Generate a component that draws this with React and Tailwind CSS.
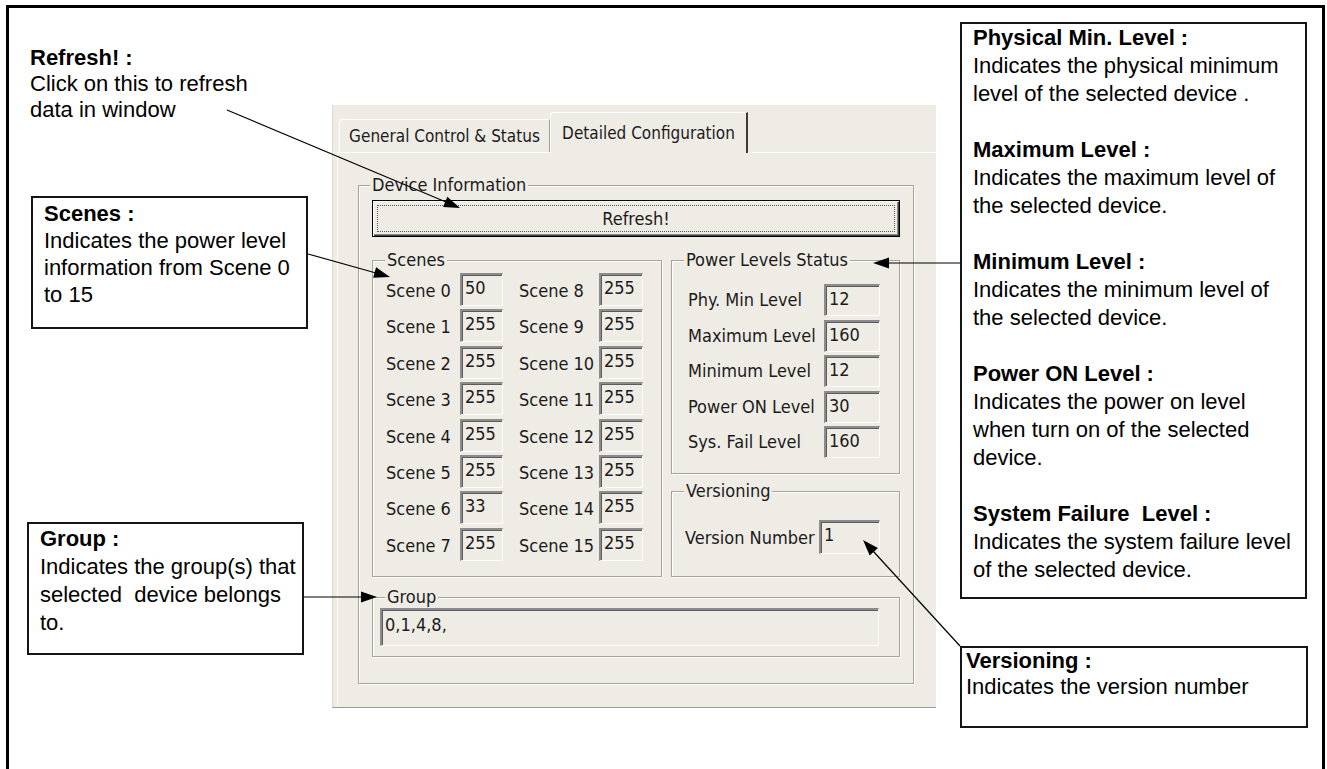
const DLG = "font-['DejaVu_Sans_Condensed','DejaVu_Sans',sans-serif] font-stretch-condensed text-[#1b1b1b]";

function Sunken({ cls, children }) {
  return (
    <div className={"shrink-0 border-t-2 border-l-2 border-t-[#8c8c8c] border-l-[#8c8c8c] border-b border-r border-b-white border-r-white shadow-[inset_1px_1px_0_#5c5c5c] bg-[#efece6] text-[18px] leading-[20px] pl-[3px] pt-[3px] " + cls}>
      {children}
    </div>
  );
}

function Legend({ children }) {
  return (
    <legend className="ml-[12px] px-[2px] bg-[#efece6] text-[18px] leading-[22px]">{children}</legend>
  );
}

const left = ["50", "255", "255", "255", "255", "255", "33", "255"];
const power = [
  ["Phy. Min Level", "12"],
  ["Maximum Level", "160"],
  ["Minimum Level", "12"],
  ["Power ON Level", "30"],
  ["Sys. Fail Level", "160"],
];

const paras = [
  ["Physical Min. Level :", ["Indicates the physical minimum", "level of the selected device ."]],
  ["Maximum Level :", ["Indicates the maximum level of", "the selected device."]],
  ["Minimum Level :", ["Indicates the minimum level of", "the selected device."]],
  ["Power ON Level :", ["Indicates the power on level", "when turn on of the selected", "device."]],
  ["System Failure  Level :", ["Indicates the system failure level", "of the selected device."]],
];

function Dialog() {
  return (
    <div className={"mt-[97px] w-[604px] h-[603px] shrink-0 bg-[#efece6] border-l border-l-[#dcd9d0] border-b border-b-[#9a9a9a] flex flex-col " + DLG}>
      {/* tabs */}
      <div className="h-[47px] flex items-end pl-[6px] shrink-0">
        <div className="w-[211px] h-[33px] border-t border-l border-white border-r border-r-[#a0a0a0] rounded-tl-[3px] flex items-center justify-center text-[17px] leading-[20px]">
          General Control &amp; Status
        </div>
        <div className="relative z-10 -mb-px w-[198px] h-[41px] bg-[#efece6] border-t border-l border-white border-r-2 border-r-[#3c3c3c] rounded-tl-[3px] flex items-center justify-center text-[17px] leading-[20px]">
          Detailed Configuration
        </div>
      </div>
      {/* tab page */}
      <div className="flex-1 ml-[4px] border-l border-t border-white flex flex-col items-start">
        <fieldset className="ml-[20px] mt-[21px] w-[548px] h-[510px] border border-[#a5a49a] shadow-[inset_1px_1px_0_#fff,1px_1px_0_#fff] px-[13px]">
          <legend className="-ml-[2px] px-[2px] bg-[#efece6] text-[18px] leading-[22px]">Device Information</legend>
          <div className="flex flex-col">
            {/* refresh button */}
            <div className="mt-[4px] w-[528px] h-[37px] border border-black bg-[#efece6] shadow-[inset_1px_1px_0_#fff,inset_-1px_-1px_0_#404040,inset_-2px_-2px_0_#8a8a8a] p-[4px]">
              <div className="w-full h-full border border-dotted border-[#555] flex items-center justify-center text-[18px] leading-[20px]">
                Refresh!
              </div>
            </div>
            {/* row */}
            <div className="mt-[12px] flex gap-[9px]">
              <fieldset className="w-[290px] h-[328px] border border-[#a5a49a] shadow-[inset_1px_1px_0_#fff,1px_1px_0_#fff]">
                <Legend>Scenes</Legend>
                <div className="pt-[2px] flex flex-col gap-[3.4px]">
                  {left.map((v, i) => (
                    <div key={i} className="flex items-start h-[33px] pl-[13px]">
                      <div className="w-[74px] pt-[8px] text-[18px] leading-[20px] whitespace-nowrap">Scene {i}</div>
                      <Sunken cls="w-[43px] h-[33px]">{v}</Sunken>
                      <div className="ml-[16px] w-[80px] pt-[8px] text-[18px] leading-[20px] whitespace-nowrap">Scene {i + 8}</div>
                      <Sunken cls="w-[44px] h-[33px]">255</Sunken>
                    </div>
                  ))}
                </div>
              </fieldset>
              <div className="w-[229px] flex flex-col">
                <fieldset className="w-[229px] h-[225px] border border-[#a5a49a] shadow-[inset_1px_1px_0_#fff,1px_1px_0_#fff]">
                  <Legend>Power Levels Status</Legend>
                  <div className="pt-[13px] flex flex-col gap-[3.5px]">
                    {power.map(([l, v]) => (
                      <div key={l} className="flex items-start h-[32px] pl-[16px]">
                        <div className="w-[136px] pt-[6px] text-[18px] leading-[20px] whitespace-nowrap">{l}</div>
                        <Sunken cls="w-[56px] h-[32px]">{v}</Sunken>
                      </div>
                    ))}
                  </div>
                </fieldset>
                <fieldset className="mt-[6px] w-[229px] h-[97px] border border-[#a5a49a] shadow-[inset_1px_1px_0_#fff,1px_1px_0_#fff]">
                  <Legend>Versioning</Legend>
                  <div className="mt-[18px] flex items-start pl-[13px]">
                    <div className="w-[134px] pt-[8px] text-[18px] leading-[20px] whitespace-nowrap">Version Number</div>
                    <Sunken cls="w-[61px] h-[34px]">1</Sunken>
                  </div>
                </fieldset>
              </div>
            </div>
            {/* group */}
            <fieldset className="mt-[9px] w-[528px] h-[71px] border border-[#a5a49a] shadow-[inset_1px_1px_0_#fff,1px_1px_0_#fff]">
              <Legend>Group</Legend>
              <div className="ml-[7px]">
                <Sunken cls="w-[499px] h-[38px] pt-[5px]">0,1,4,8,</Sunken>
              </div>
            </fieldset>
          </div>
        </fieldset>
      </div>
    </div>
  );
}

function Arrows() {
  return (
    <svg className="absolute top-0 left-0 pointer-events-none" width="1327" height="769" viewBox="0 0 1327 769">
      <g stroke="#000" strokeWidth="1.2" fill="none">
        <line x1="227" y1="110" x2="446" y2="202" />
        <line x1="308" y1="254" x2="376" y2="273" />
        <line x1="960" y1="263" x2="888" y2="263" />
        <line x1="304" y1="597" x2="362" y2="597" />
        <line x1="960" y1="646" x2="873" y2="551" />
      </g>
      <g fill="#000">
        <polygon points="460,208 443.1,206.9 447.4,196.7" />
        <polygon points="390,277 373.1,277.8 376.1,267.2" />
        <polygon points="873,263 889,257.5 889,268.5" />
        <polygon points="377,597 361,591.5 361,602.5" />
        <polygon points="863,540 877.9,548.1 869.7,555.5" />
      </g>
    </svg>
  );
}

export default function App() {
  return (
    <div className="relative w-[1327px] h-[769px] bg-white overflow-hidden font-['Liberation_Sans',Arial,sans-serif] text-black">
      <div className="ml-[6px] mt-[5px] w-[1319px] h-[764px] border-l-[3px] border-t-[3px] border-r-[3px] border-black flex items-start">
        {/* left column */}
        <div className="w-[323px] shrink-0 flex flex-col items-start">
          <div className="ml-[21px] mt-[37px] text-[22px] leading-[26px]">
            <div className="font-bold">Refresh! :</div>
            <div>Click on this to refresh</div>
            <div>data in window</div>
          </div>
          <div className="ml-[22px] mt-[73px] w-[277px] h-[133px] border-2 border-[#151515] pl-[11px] pt-[2px] text-[22px] leading-[27px]">
            <div className="font-bold">Scenes :</div>
            <div>Indicates the power level</div>
            <div>information from Scene 0</div>
            <div>to 15</div>
          </div>
          <div className="ml-[18px] mt-[193px] w-[277px] h-[133px] border-2 border-[#151515] pl-[11px] pt-[1px] text-[22px] leading-[28px]">
            <div className="font-bold">Group :</div>
            <div>Indicates the group(s) that</div>
            <div className="whitespace-pre">selected  device belongs</div>
            <div>to.</div>
          </div>
        </div>
        <Dialog />
        {/* right column */}
        <div className="ml-[24px] mt-[14px] flex flex-col shrink-0">
          <div className="w-[347px] h-[577px] border-2 border-[#151515] pl-[11px] text-[22px] leading-[28px]">
            {paras.map(([t, lines], i) => (
              <div key={t} className={i === 0 ? "" : "mt-[28px]"}>
                <div className="font-bold whitespace-pre">{t}</div>
                {lines.map((l) => (
                  <div key={l} className="whitespace-nowrap">{l}</div>
                ))}
              </div>
            ))}
          </div>
          <div className="mt-[47px] w-[348px] h-[82px] border-2 border-[#151515] pl-[4px] text-[22px] leading-[26px]">
            <div className="font-bold">Versioning :</div>
            <div>Indicates the version number</div>
          </div>
        </div>
      </div>
      <Arrows />
    </div>
  );
}
